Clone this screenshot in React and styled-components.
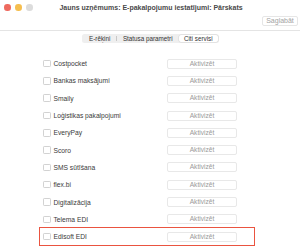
import React from "react";
import styled, { createGlobalStyle } from "styled-components";

const GlobalStyle = createGlobalStyle`
  html, body {
    margin: 0;
    padding: 0;
    background: #ffffff;
  }
  body {
    font-family: "Liberation Sans", Arial, sans-serif;
  }
`;

const Window = styled.div`
  width: 300px;
  height: 246px;
  background: #ffffff;
  overflow: hidden;
`;

const TitleBar = styled.div`
  border-bottom: 1px solid #e4e4e4;
  padding: 4px 2px 4px 4px;
  box-sizing: border-box;
  height: 31px;
`;

const TopRow = styled.div`
  display: grid;
  grid-template-columns: 40px 1fr 40px;
  align-items: center;
  height: 7px;
`;

const Lights = styled.div`
  display: flex;
  gap: 4.5px;
`;

const Light = styled.span`
  width: 6.5px;
  height: 6.5px;
  border-radius: 50%;
  background: ${(p) => p.color};
`;

const Title = styled.div`
  text-align: center;
  font-size: 7px;
  font-weight: 700;
  color: #4a4a4a;
  white-space: nowrap;
  line-height: 7px;
`;

const ToolRow = styled.div`
  display: flex;
  justify-content: flex-end;
  margin-top: 5px;
`;

const SaveButton = styled.button`
  width: 36px;
  height: 10px;
  padding: 0;
  border: 1px solid #e6e6e6;
  border-radius: 2px;
  background: #ffffff;
  color: #a3a3a3;
  font-family: inherit;
  font-size: 7px;
  line-height: 8px;
`;

const TabsWrap = styled.div`
  display: flex;
  justify-content: center;
  margin-top: 3px;
  padding-left: 1px;
`;

const Segmented = styled.div`
  display: flex;
  align-items: center;
  height: 9px;
  padding: 0 1.5px;
  background: #efefef;
  border-radius: 2.5px;
`;

const Segment = styled.div`
  width: ${(p) => p.w}px;
  height: 7.5px;
  display: flex;
  align-items: center;
  justify-content: center;
  font-size: 6.3px;
  color: #333;
  white-space: nowrap;
  border-radius: 2px;
  background: ${(p) => (p.active ? "#ffffff" : "transparent")};
  box-shadow: ${(p) => (p.active ? "0 0 0 0.5px #d6d6d6" : "none")};
`;

const Divider = styled.span`
  width: 0.5px;
  height: 5px;
  background: #c8c8c8;
`;

const List = styled.div`
  margin-top: 12px;
  padding-left: 39.5px;
`;

const Row = styled.div`
  width: 214px;
  height: 17.3px;
  box-sizing: border-box;
  display: grid;
  grid-template-columns: 1fr 70px;
  align-items: center;
  padding: 0 16.5px 0 3.5px;
  outline: ${(p) => (p.highlight ? "1.6px solid #ea5440" : "none")};
  outline-offset: 0;
`;

const Label = styled.label`
  display: flex;
  align-items: center;
  gap: 3px;
  font-size: 6.7px;
  color: #3a3a3a;
  white-space: nowrap;
`;

const Box = styled.span`
  width: 5.5px;
  height: 5.5px;
  border: 0.6px solid #d2d2d2;
  border-radius: 1.2px;
  background: #fff;
`;

const ActivateButton = styled.button`
  height: 10px;
  padding: 0;
  border: 0.6px solid #e8e8e8;
  border-radius: 2px;
  background: #ffffff;
  color: #9a9a9a;
  font-family: inherit;
  font-size: 6.6px;
  line-height: 8px;
`;

const services = [
  "Costpocket",
  "Bankas maksājumi",
  "Smaily",
  "Loģistikas pakalpojumi",
  "EveryPay",
  "Scoro",
  "SMS sūtīšana",
  "flex.bi",
  "Digitalizācija",
  "Telema EDI",
  "Edisoft EDI",
];

export default function App() {
  return (
    <Window>
      <GlobalStyle />
      <TitleBar>
        <TopRow>
          <Lights>
            <Light color="#ee6a5f" />
            <Light color="#f5be4f" />
            <Light color="#dcdcdc" />
          </Lights>
          <Title>Jauns uzņēmums: E-pakalpojumu iestatījumi: Pārskats</Title>
          <span />
        </TopRow>
        <ToolRow>
          <SaveButton>Saglabāt</SaveButton>
        </ToolRow>
      </TitleBar>
      <TabsWrap>
        <Segmented>
          <Segment w={33}>E-rēķini</Segment>
          <Divider />
          <Segment w={62}>Statusa parametri</Segment>
          <Segment w={39} active>
            Citi servisi
          </Segment>
        </Segmented>
      </TabsWrap>
      <List>
        {services.map((name, i) => (
          <Row key={name} highlight={i === services.length - 1}>
            <Label>
              <Box />
              {name}
            </Label>
            <ActivateButton>Aktivizēt</ActivateButton>
          </Row>
        ))}
      </List>
    </Window>
  );
}
